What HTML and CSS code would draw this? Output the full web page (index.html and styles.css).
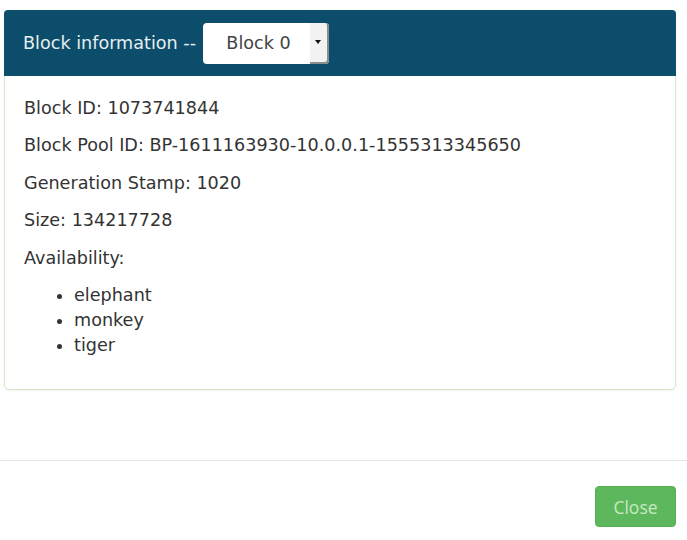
FILE: index.html
```html
<!DOCTYPE html>
<html>
<head>
<meta charset="utf-8">
<link rel="stylesheet" href="styles.css">
</head>
<body>
<div class="modal-body">
  <div class="panel">
    <div class="panel-heading">
      <span class="title">Block information --</span>
      <div class="select">
        <span class="select-value">Block 0</span>
        <span class="select-arrow"></span>
      </div>
    </div>
    <div class="panel-body">
      <p>Block ID: 1073741844</p>
      <p>Block Pool ID: BP-1611163930-10.0.0.1-1555313345650</p>
      <p>Generation Stamp: 1020</p>
      <p>Size: 134217728</p>
      <p>Availability:</p>
      <ul>
        <li>elephant</li>
        <li>monkey</li>
        <li>tiger</li>
      </ul>
    </div>
  </div>
</div>
<div class="modal-footer">
  <button class="btn-close">Close</button>
</div>
</body>
</html>
```
FILE: styles.css
```css
html, body {
  margin: 0;
  padding: 0;
  background: #fff;
}
body {
  font-family: "DejaVu Sans", sans-serif;
  font-size: 17.6px;
  color: #333;
  width: 687px;
  height: 540px;
  overflow: hidden;
}
.modal-body {
  padding: 10px 11px 0 4px;
  height: 460px;
  box-sizing: border-box;
}
.panel {
  border: 1px solid #d6e9c6;
  border-radius: 5px;
  box-shadow: 0 1px 1px rgba(0,0,0,0.05);
  background: #fff;
}
.panel-heading {
  background: #0b4d6a;
  border-radius: 4px 4px 0 0;
  height: 66px;
  box-sizing: border-box;
  display: flex;
  align-items: center;
  padding: 0 0 0 19px;
  color: #e6edf1;
  margin: -1px -1px 0 -1px;
}
.title {
  margin-right: 7px;
}
.select {
  width: 126px;
  height: 41px;
  background: #fff;
  border-radius: 4px;
  display: flex;
  align-items: stretch;
  box-sizing: border-box;
}
.select-value {
  flex: 1;
  display: flex;
  align-items: center;
  justify-content: center;
  color: #444;
  padding-left: 4px;
}
.select-arrow {
  width: 17px;
  background: #f2f2f2;
  border-right: 2px solid #8c8c8c;
  border-bottom: 2px solid #8c8c8c;
  border-radius: 0 4px 4px 0;
  position: relative;
}
.select-arrow::after {
  content: "";
  position: absolute;
  left: 5px;
  top: 17px;
  border-left: 3.5px solid transparent;
  border-right: 3.5px solid transparent;
  border-top: 4px solid #111;
}
.panel-body {
  padding: 19.5px 19px 18px 19px;
}
.panel-body p {
  margin: 0 0 12.5px 0;
  line-height: 25px;
}
.panel-body ul {
  margin: 0 0 12.5px 0;
  padding-left: 50px;
  line-height: 25px;
}
.modal-footer {
  border-top: 1px solid #e5e5e5;
  height: 80px;
  box-sizing: border-box;
  display: flex;
  justify-content: flex-end;
  align-items: flex-start;
  padding: 25px 11px 0 0;
}
.btn-close {
  width: 81px;
  height: 41px;
  background: #5db85d;
  border: 1px solid #52b052;
  border-radius: 4px;
  color: #c8e8c0;
  font-family: "Open Sans", sans-serif;
  font-size: 17.5px;
  padding: 0;
}
```
